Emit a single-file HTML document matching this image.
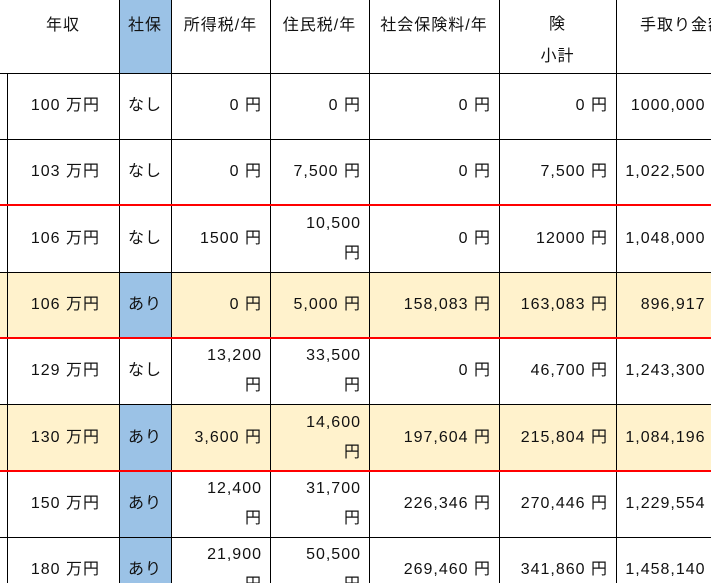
<!DOCTYPE html>
<html><head><meta charset="utf-8"><style>
html,body{margin:0;padding:0;width:711px;height:583px;overflow:hidden;background:#fff;}
body{position:relative;font-family:"Liberation Sans","Noto Sans CJK JP",sans-serif;font-size:16px;letter-spacing:1px;color:#111;}
.c{position:absolute;box-sizing:border-box;display:flex;align-items:center;line-height:30px;white-space:nowrap;}
.r{justify-content:flex-end;text-align:right;padding-right:8px;}
.m{justify-content:center;text-align:center;}
.y{background:#FFF2CC;}
.b{background:#9BC2E6;}
.v{position:absolute;top:0;width:1px;height:583px;background:#000;}
.h{position:absolute;left:0;width:711px;height:1px;background:#000;}
.red{height:2px;background:#f00;}
</style></head><body>
<div id="g"></div>
<script>
const cols=[-100,7,119,171,270,369,499,616,736];
const tops=[0,73,139,205,272,338,404,471,537,603];
const rows=[
['100 万円','なし','0 円','0 円','0 円','0 円','1000,000 円',''],
['103 万円','なし','0 円','7,500 円','0 円','7,500 円','1,022,500 円',''],
['106 万円','なし','1500 円','10,500<br>円','0 円','12000 円','1,048,000 円',''],
['106 万円','あり','0 円','5,000 円','158,083 円','163,083 円','896,917 円','y'],
['129 万円','なし','13,200<br>円','33,500<br>円','0 円','46,700 円','1,243,300 円',''],
['130 万円','あり','3,600 円','14,600<br>円','197,604 円','215,804 円','1,084,196 円','y'],
['150 万円','あり','12,400<br>円','31,700<br>円','226,346 円','270,446 円','1,229,554 円',''],
['180 万円','あり','21,900<br>円','50,500<br>円','269,460 円','341,860 円','1,458,140 円','']];
let h='';
const hd=['','年収','社保','所得税/年','住民税/年','社会保険料/年','税・社会保<br>険<br>小計','手取り金額'];
for(let i=0;i<8;i++){
 if(i==2) h+=`<div class="c b" style="left:${cols[i]}px;top:0;width:${cols[i+1]-cols[i]}px;height:73px;"></div>`;
 let top=i==6?-39:0, ht=i==6?128:52;
 h+=`<div class="c m" style="left:${cols[i]}px;top:${top}px;width:${cols[i+1]-cols[i]}px;height:${ht}px;line-height:32px;${i==7?'justify-content:flex-start;padding-left:24px;':''}">${hd[i]}</div>`;
}
rows.forEach((r,ri)=>{
 const t=tops[ri+1],hh=tops[ri+2]-t;
 for(let i=0;i<8;i++){
  let bg=r[7]?' y':'';
  let cl;
  if(i==0) cl='c'+bg;
  else if(i==1) cl='c r'+bg;
  else if(i==2) cl='c m'+(r[1]=='あり'?' b':bg);
  else cl='c r'+bg;
  let txt=i==0?'':r[i-1];
  let pr=i==1?'padding-right:19px;':'';
  h+=`<div class="${cl}" style="left:${cols[i]}px;top:${t}px;width:${cols[i+1]-cols[i]}px;height:${hh}px;${pr}">${txt}</div>`;
 }
});
for(let i=1;i<8;i++){h+=`<div class="v" style="left:${cols[i]}px;${i==1?'top:73px;':''}"></div>`;}
for(let i=1;i<9;i++){
 const red=[3,5,7].includes(i);
 h+=`<div class="h${red?' red':''}" style="top:${tops[i]-(red?1:0)}px"></div>`;
}
document.getElementById('g').innerHTML=h;
</script>
</body></html>
